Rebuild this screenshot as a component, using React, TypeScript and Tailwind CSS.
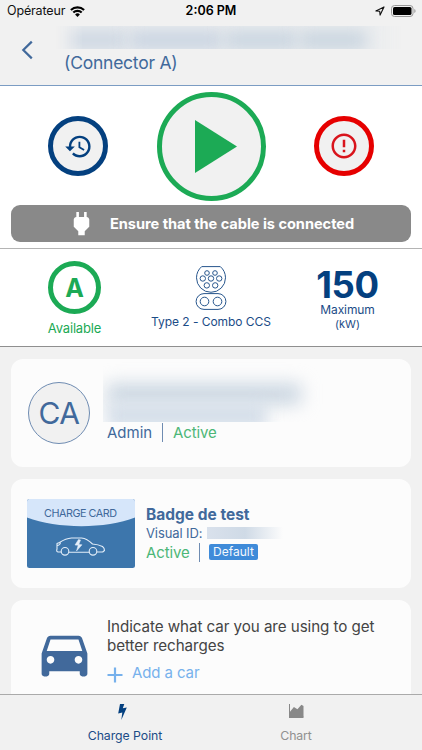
import React from "react";
import { MdHistory, MdErrorOutline, MdPower, MdDirectionsCar } from "react-icons/md";

function StatusBar() {
  return (
    <div className="flex h-[22px] items-center text-[13px] leading-[22px] text-[#111]">
      <div className="flex w-[150px] items-center pl-[7px]">
        <span className="w-[58px] whitespace-nowrap text-[12.5px] tracking-[-0.15px]">Opérateur</span>
        <svg className="ml-[5px]" width="15" height="11" viewBox="0 0 15 11" fill="none" stroke="#000" strokeWidth="2.1">
          <path d="M.9 4.1a9.4 9.4 0 0 1 13.2 0M3.3 6.6a6 6 0 0 1 8.4 0" />
          <path d="M7.5 10.9 5.1 8.5a3.4 3.4 0 0 1 4.8 0z" fill="#000" stroke="none" />
        </svg>
      </div>
      <div className="w-[122px] text-center text-[12.5px] font-semibold text-black">2:06 PM</div>
      <div className="flex flex-1 items-center justify-end pr-[6px]">
        <svg className="mr-[6px]" width="10" height="10" viewBox="0 0 10 10" fill="none" stroke="#111" strokeWidth="1.1" strokeLinejoin="round">
          <path d="M9 .9.9 4.9l3.8.4.4 3.8z" />
        </svg>
        <svg width="25" height="12" viewBox="0 0 25 12">
          <rect x=".5" y=".5" width="21.5" height="11" rx="3" fill="none" stroke="#999" />
          <rect x="2" y="2" width="18.5" height="8" rx="1.6" fill="#000" />
          <path d="M23.3 4v4q1.3-.6 1.3-2t-1.3-2z" fill="#999" />
        </svg>
      </div>
    </div>
  );
}

function Header() {
  return (
    <header className="h-[86px] border-b border-[#7b9cc3] bg-[#f1f1f1]">
      <StatusBar />
      <div className="flex pt-[4px]">
        <svg className="ml-[21px] mt-[14px]" width="13" height="20" viewBox="0 0 13 20" fill="none" stroke="#41699b" strokeWidth="2.2">
          <path d="M10.8 1.6 2.3 10l8.5 8.4" />
        </svg>
        <div className="ml-[21px] w-[347px]">
          <div className="flex h-[23px] items-center gap-[3px] overflow-hidden bg-[#ebedef] pl-[8px] pt-[5px] mask-x-from-92%">
            <div className="h-[18px] w-[64px] bg-[#ccd6e2] blur-[8px]" />
            <div className="h-[18px] w-[92px] bg-[#c8d3e1] blur-[8px]" />
            <div className="h-[18px] w-[72px] bg-[#c8d4e0] blur-[8px]" />
            <div className="h-[18px] w-[66px] bg-[#c8d4df] blur-[8px]" />
          </div>
          <div className="mt-[1px] pl-[9px] text-[17.5px] leading-[25px] tracking-[-0.24px] text-[#41699b]">(Connector A)</div>
        </div>
      </div>
    </header>
  );
}

function Controls() {
  return (
    <section className="h-[163px] border-b border-[#b4b4b4] bg-white pt-[6px]">
      <div className="flex h-[109px] items-center justify-between pl-[48px] pr-[48px]">
        <button className="-mt-px flex size-[60px] items-center justify-center rounded-full border-[5px] border-[#04407f] bg-[#f1f1f1] text-[#04407f]">
          <MdHistory size={29} />
        </button>
        <button className="flex size-[109px] items-center justify-center rounded-full border-[5px] border-[#1caa55] bg-[#f1f1f1]">
          <svg className="ml-[10px]" width="42" height="53" viewBox="0 0 42 53" fill="#1caa55">
            <path d="M0 0 42 26.5 0 53z" />
          </svg>
        </button>
        <button className="-mt-px flex size-[60px] items-center justify-center rounded-full border-[5px] border-[#e60000] bg-[#f1f1f1] text-[#d9141c]">
          <MdErrorOutline size={30} />
        </button>
      </div>
      <div className="mx-[11px] mt-[4px] flex h-[37px] items-center rounded-[9px] bg-[#898989] text-white">
        <MdPower size={31} className="ml-[55px]" />
        <span className="ml-[13px] whitespace-nowrap pt-[1px] text-[14.6px] font-bold leading-[36px] tracking-[-0.04px]">Ensure that the cable is connected</span>
      </div>
    </section>
  );
}

function ComboConnector() {
  const pins: [number, number, number][] = [
    [11.5, 7, 2.3], [19.5, 7, 2.3], [7.3, 12.5, 2.7], [15.5, 12.5, 2.7], [23.7, 12.5, 2.7], [11.3, 19.4, 2.7], [19.7, 19.4, 2.7],
  ];
  return (
    <svg width="32" height="44" viewBox="0 0 31 44" fill="none" stroke="#27568d" strokeWidth="1">
      <path d="M6.2.6h18.6c3.2 2.7 5.2 6.6 5.2 11.2a14.5 14.5 0 0 1-29 0C1 7.200 3 3.300 6.200.6z" />
      {pins.map(([x, y, r], i) => (
        <circle key={i} cx={x} cy={y} r={r} />
      ))}
      <rect x=".6" y="27.600" width="29.8" height="15.800" rx="7.900" />
      <circle cx="9" cy="35.500" r="4.300" />
      <circle cx="22" cy="35.500" r="4.300" />
    </svg>
  );
}

function Summary() {
  return (
    <section className="flex h-[98px] border-b border-[#8f8f8f] bg-white text-[#1b4c87]">
      <div className="flex w-[149px] flex-col items-center pt-[12px] text-[#1caa55]">
        <div className="flex size-[53px] items-center justify-center rounded-full border-[5px] border-[#1caa55] pt-[1px] text-[25px] font-bold leading-[42px]">A</div>
        <div className="mt-[5px] text-[13px] leading-[18px] tracking-[-0.18px]">Available</div>
      </div>
      <div className="flex w-[124px] flex-col items-center pt-[17px]">
        <ComboConnector />
        <div className="mt-[3px] whitespace-nowrap text-[12px] leading-[18px] tracking-[-0.05px]">Type 2 - Combo CCS</div>
      </div>
      <div className="flex w-[149px] flex-col items-center pt-[18px]">
        <div className="text-[36.5px] font-bold leading-[36px] tracking-[-0.4px] text-[#04407f]">150</div>
        <div className="text-[12px] leading-[14px] tracking-[-0.1px]">Maximum</div>
        <div className="text-[11px] leading-[14px]">(kW)</div>
      </div>
    </section>
  );
}

function UserCard() {
  return (
    <div className="flex h-[108px] rounded-[12px] bg-[#fcfcfc] pl-[17px]">
      <div className="mt-[23px] flex size-[62px] items-center justify-center rounded-full border border-[#6f8cb2] bg-[#f1f1f1] text-[30px] leading-[60px] tracking-[-0.5px] text-[#41699b]">CA</div>
      <div className="ml-[13px]">
        <div className="h-[63px] w-[220px] overflow-hidden pl-[4px] pt-[25px]">
          <div className="h-[20px] w-[194px] bg-[#c8d4e0] blur-[9px]" />
          <div className="h-[24px] w-[160px] bg-[#d3dde8] blur-[8px]" />
        </div>
        <div className="mt-[1px] flex items-center pl-[4px] text-[15px] leading-[20px]">
          <span className="w-[55px] text-[#41699b]">Admin</span>
          <span className="-mt-[1px] h-[19px] w-px bg-[#6f8cb2]" />
          <span className="ml-[10px] tracking-[-0.1px] text-[#4cb777]">Active</span>
        </div>
      </div>
    </div>
  );
}

function ChargeCard() {
  return (
    <div className="mt-[20px] h-[69px] w-[108px]">
      <svg width="108" height="69" viewBox="0 0 108 69">
        <rect width="108" height="69" rx="2.500" fill="#3d76ac" />
        <path d="M2.500 0h103Q108 0 108 2.500V18.500C79 30 30 30 0 18.500V2.500Q0 0 2.500 0z" fill="#d6e6fa" />
        <text x="17" y="18" fontSize="10.800" fill="#41699b" textLength="73" fontFamily="Inter, sans-serif">CHARGE CARD</text>
        <g fill="none" stroke="#e4eef9" strokeWidth="1.100" strokeLinejoin="round">
          <path d="M34.200 53H31q-2-.5-1-3V44.500l2.500-1q6.500-4.200 12-4.500h10q5.500.500 11 6 6 .500 10 2.500 2 1.500 2 4l-1.800 1.500H70M42 53.200h20" />
          <circle cx="38" cy="52.300" r="3.800" />
          <circle cx="66" cy="52.300" r="3.800" />
          <path d="M30 46.500q3 0 3.500-3" />
          <path d="m51.500 40.500-3.500 5.500 3.200.3-1.700 5.700 5.500-6.200-3.200-.3 1.700-4.500z" fill="#e4eef9" strokeWidth=".5" />
        </g>
      </svg>
    </div>
  );
}

function BadgeCard() {
  return (
    <div className="flex h-[109px] rounded-[12px] bg-[#fcfcfc] pl-[16px]">
      <ChargeCard />
      <div className="ml-[11px] pt-[26px] text-[#41699b]">
        <div className="text-[15.5px] font-bold leading-[19px]">Badge de test</div>
        <div className="flex h-[18px] items-center text-[13px] leading-[18px]">
          <span className="w-[61px] tracking-[-0.1px]">Visual ID:</span>
          <span className="h-[12px] w-[76px] bg-linear-to-r from-[#d9e1ec] via-[#cfdae6] via-50% to-[#fcfcfc]" />
        </div>
        <div className="flex h-[20px] items-center text-[15px] leading-[20px]">
          <span className="w-[53px] pt-[1px] tracking-[-0.1px] text-[#4cb777]">Active</span>
          <span className="h-[19px] w-px bg-[#6f8cb2]" />
          <span className="ml-[9px] h-[16px] w-[49px] rounded-[2px] bg-[#3f8bd9] text-center text-[12px] leading-[16px] text-[#f4f8fd]">Default</span>
        </div>
      </div>
    </div>
  );
}

function CarCard() {
  return (
    <div className="flex h-[109px] rounded-[12px] bg-[#fcfcfc] pl-[23px]">
      <MdDirectionsCar size={61} className="mt-[23px] text-[#41699b]" />
      <div className="ml-[12px] pt-[17px]">
        <p className="whitespace-nowrap text-[15.2px] leading-[19px] tracking-[-0.07px] text-[#444]">
          Indicate what car you are using to get
          <br />
          better recharges
        </p>
        <div className="mt-[8px] flex items-center text-[15px] leading-[20px] tracking-[-0.1px] text-[#77b1ec]">
          <svg className="mr-[9px] mt-[3px]" width="16" height="16" viewBox="0 0 16 16" stroke="#77b1ec" strokeWidth="2.200">
            <path d="M8 .5v15M.5 8h15" />
          </svg>
          Add a car
        </div>
      </div>
    </div>
  );
}

function TabBar() {
  return (
    <nav className="flex h-[56px] border-t border-[#aaa] bg-[#f1f1f1] text-[12.3px]">
      <div className="flex w-[250px] flex-col items-center pt-[9px] text-[#1b4c87]">
        <svg className="-ml-[6px]" width="9" height="16" viewBox="0 0 9 16" fill="#04407f">
          <path d="M2 0h4.300L4.800 4.300 8.800 3.500 3.300 16l1-7.400L.2 9.600z" />
        </svg>
        <div className="mt-[7px] leading-[18px] tracking-[-0.05px]">Charge Point</div>
      </div>
      <div className="flex w-[92px] flex-col items-center pt-[9px] text-[#909090]">
        <svg width="15" height="14" viewBox="0 0 15 14" fill="#888">
          <path d="M0 0h1v12.500h13.500V14H0z" />
          <path d="M1 13V7.800L4.900 3l3.500 2.300L12.400.8 14.500 2v11z" />
        </svg>
        <div className="mt-[9px] leading-[18px] tracking-[-0.15px]">Chart</div>
      </div>
    </nav>
  );
}

export default function App() {
  return (
    <div className="flex h-[750px] w-[422px] flex-col overflow-hidden bg-[#f1f1f1] font-['Inter',sans-serif]">
      <Header />
      <Controls />
      <Summary />
      <main className="flex h-[347px] flex-col gap-[12px] overflow-hidden px-[11px] pt-[12px] *:shrink-0">
        <UserCard />
        <BadgeCard />
        <CarCard />
      </main>
      <TabBar />
    </div>
  );
}
